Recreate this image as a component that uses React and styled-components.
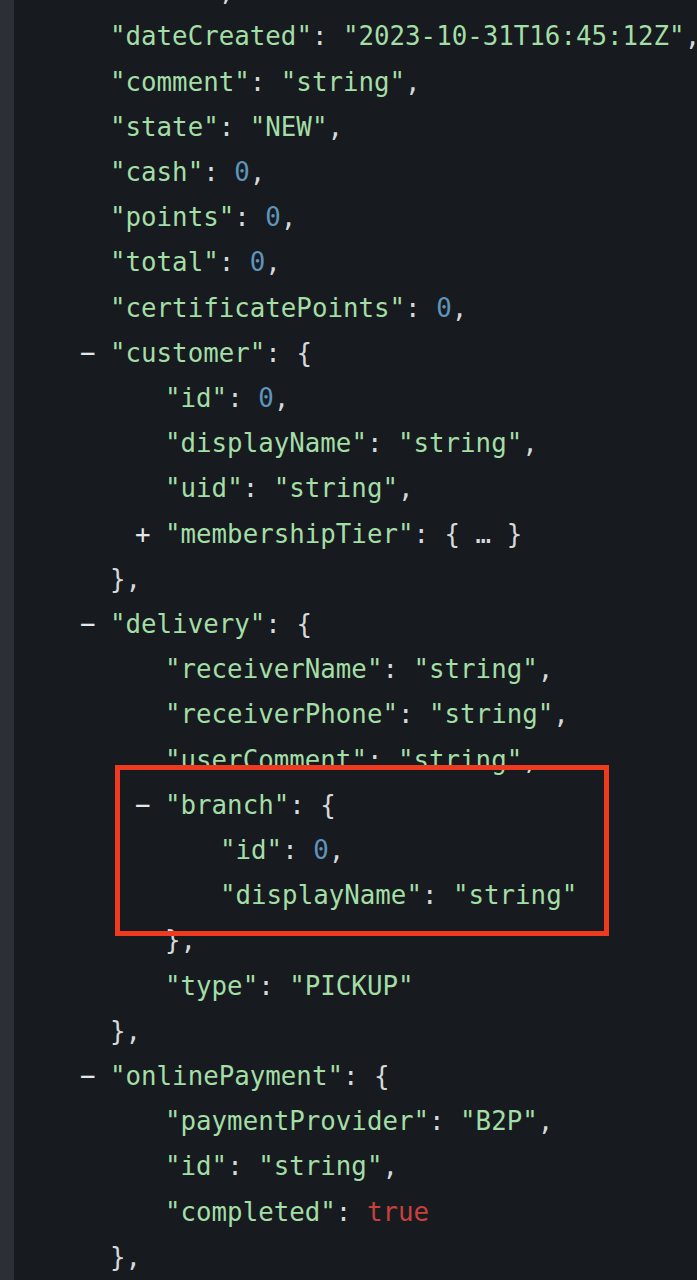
import React from "react";
import styled, { createGlobalStyle } from "styled-components";

const GlobalStyle = createGlobalStyle`
  html, body {
    margin: 0;
    padding: 0;
    background: #171b1f;
  }
`;

const Screen = styled.div`
  display: flex;
  height: 1280px;
  overflow: hidden;
  background: #171b1f;
`;

const Gutter = styled.div`
  width: 14px;
  flex-shrink: 0;
  background: #2c3036;
`;

const Code = styled.div`
  position: relative;
  flex: 1;
  margin-top: -30.8px;
  font-family: "DejaVu Sans Mono", "Liberation Mono", monospace;
  font-size: 25.8px;
  line-height: 45.2px;
  color: #d6d8da;
  white-space: pre;
`;

const Line = styled.div`
  display: flex;
  padding-left: ${({ $level }) => 96 + ($level - 1) * 55}px;
`;

const Toggle = styled.span`
  width: 30px;
  margin-left: -30px;
  color: #e4e6e8;
`;

const Key = styled.span`
  color: #a3dea6;
`;

const Punct = styled.span`
  color: #d6d8da;
`;

const Str = styled.span`
  color: #a3dea6;
`;

const Num = styled.span`
  color: #5f94bd;
`;

const Bool = styled.span`
  color: #c7403d;
`;

const Highlight = styled.div`
  position: absolute;
  left: 101px;
  top: 796px;
  width: 484px;
  height: 161px;
  border: 5px solid #ee3a1e;
  pointer-events: none;
`;

const lines = [
  { level: 1, key: "id", value: "0", kind: "num", comma: true },
  { level: 1, key: "dateCreated", value: "\"2023-10-31T16:45:12Z\"", kind: "str", comma: true },
  { level: 1, key: "comment", value: "\"string\"", kind: "str", comma: true },
  { level: 1, key: "state", value: "\"NEW\"", kind: "str", comma: true },
  { level: 1, key: "cash", value: "0", kind: "num", comma: true },
  { level: 1, key: "points", value: "0", kind: "num", comma: true },
  { level: 1, key: "total", value: "0", kind: "num", comma: true },
  { level: 1, key: "certificatePoints", value: "0", kind: "num", comma: true },
  { level: 1, toggle: "−", key: "customer", value: "{", kind: "open" },
  { level: 2, key: "id", value: "0", kind: "num", comma: true },
  { level: 2, key: "displayName", value: "\"string\"", kind: "str", comma: true },
  { level: 2, key: "uid", value: "\"string\"", kind: "str", comma: true },
  { level: 2, toggle: "+", key: "membershipTier", value: "{ … }", kind: "open" },
  { level: 1, close: "}," },
  { level: 1, toggle: "−", key: "delivery", value: "{", kind: "open" },
  { level: 2, key: "receiverName", value: "\"string\"", kind: "str", comma: true },
  { level: 2, key: "receiverPhone", value: "\"string\"", kind: "str", comma: true },
  { level: 2, key: "userComment", value: "\"string\"", kind: "str", comma: true },
  { level: 2, toggle: "−", key: "branch", value: "{", kind: "open" },
  { level: 3, key: "id", value: "0", kind: "num", comma: true },
  { level: 3, key: "displayName", value: "\"string\"", kind: "str" },
  { level: 2, close: "}," },
  { level: 2, key: "type", value: "\"PICKUP\"", kind: "str" },
  { level: 1, close: "}," },
  { level: 1, toggle: "−", key: "onlinePayment", value: "{", kind: "open" },
  { level: 2, key: "paymentProvider", value: "\"B2P\"", kind: "str", comma: true },
  { level: 2, key: "id", value: "\"string\"", kind: "str", comma: true },
  { level: 2, key: "completed", value: "true", kind: "bool" },
  { level: 1, close: "}," },
];

function Value({ kind, children }) {
  if (kind === "num") return <Num>{children}</Num>;
  if (kind === "bool") return <Bool>{children}</Bool>;
  if (kind === "str") return <Str>{children}</Str>;
  return <Punct>{children}</Punct>;
}

export default function App() {
  return (
    <>
      <GlobalStyle />
      <Screen>
        <Gutter />
        <Code>
          {lines.map((l, i) => (
            <Line key={i} $level={l.level}>
              <Toggle>{l.toggle || " "}</Toggle>
              {l.close ? (
                <Punct>{l.close}</Punct>
              ) : (
                <>
                  <Key>"{l.key}"</Key>
                  <Punct>: </Punct>
                  <Value kind={l.kind}>{l.value}</Value>
                  {l.comma && <Punct>,</Punct>}
                </>
              )}
            </Line>
          ))}
          <Highlight />
        </Code>
      </Screen>
    </>
  );
}
